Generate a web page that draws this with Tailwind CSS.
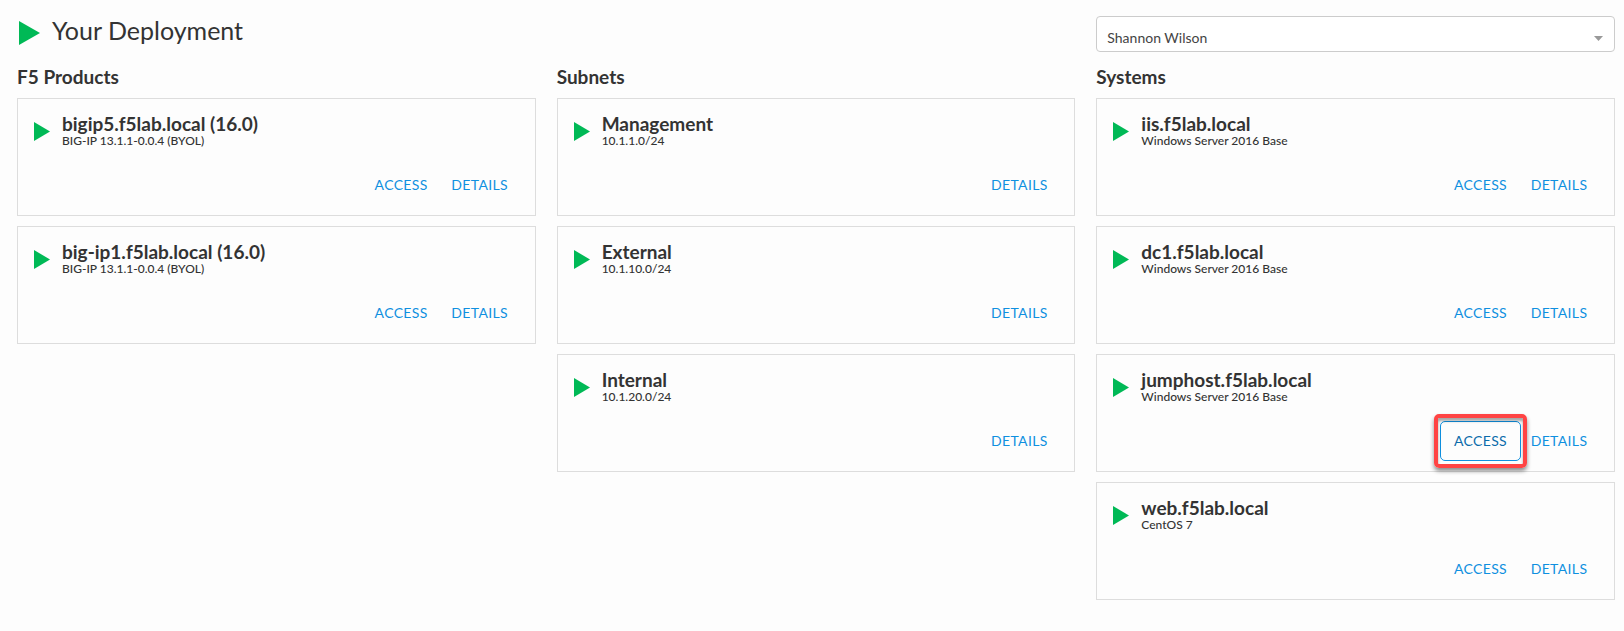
<!DOCTYPE html>
<html lang="en">
<head>
<meta charset="utf-8">
<title>Your Deployment</title>
<script src="https://cdn.jsdelivr.net/npm/@tailwindcss/browser@4"></script>
</head>
<body class="min-h-screen bg-[#fdfdfd] font-['Lato',sans-serif] text-[#333333]">
<svg class="hidden"><symbol id="play" viewBox="0 0 16 19" preserveAspectRatio="none"><path d="M0 0L16 9.5L0 19Z" fill="#00b956"/></symbol></svg>
<main class="pt-4 pr-[9px] pb-7 pl-[17px]">
  <header class="grid grid-cols-3 gap-x-[21px]">
    <div class="col-span-2 flex items-start">
      <svg class="mt-[5px] ml-[2px] h-6 w-[21px]"><use href="#play"/></svg>
      <h1 class="ml-3 text-[25px] leading-7 font-normal">Your Deployment</h1>
    </div>
    <div class="relative">
      <select aria-label="User" class="h-9 w-full appearance-none rounded border border-[#cccccc] bg-white px-[10px] pt-[7px] text-sm text-[#444444]"><option>Shannon Wilson</option></select>
      <svg class="pointer-events-none absolute top-5 right-3 h-[5px] w-[9px]" viewBox="0 0 9 5"><path d="M0 0H9L4.5 5Z" fill="#999999"/></svg>
    </div>
  </header>
  <div class="mt-[13px] grid grid-cols-3 items-start gap-x-[21px]">
    <section>
      <h2 class="text-[19px] leading-6 font-bold">F5 Products</h2>
      <div class="mt-[9px] flex flex-col gap-[10px]">
        <article class="flex h-[118px] flex-col justify-between border border-[#dddddd] pt-[14px] pr-[17px] pb-[10px] pl-4">
          <div class="flex"><svg class="mt-[9px] h-[19px] w-4"><use href="#play"/></svg><div class="ml-3"><h3 class="text-[19px] leading-[22px] font-bold">bigip5.f5lab.local (16.0)</h3><p class="text-xs leading-3 font-medium">BIG-IP 13.1.1-0.0.4 (BYOL)</p></div></div>
          <div class="flex justify-end"><button class="h-10 w-[81px] text-sm tracking-wide text-[#0f90e0]">ACCESS</button><button class="h-10 w-[76px] text-sm tracking-wide text-[#0f90e0]">DETAILS</button></div>
        </article>
        <article class="flex h-[118px] flex-col justify-between border border-[#dddddd] pt-[14px] pr-[17px] pb-[10px] pl-4">
          <div class="flex"><svg class="mt-[9px] h-[19px] w-4"><use href="#play"/></svg><div class="ml-3"><h3 class="text-[19px] leading-[22px] font-bold">big-ip1.f5lab.local (16.0)</h3><p class="text-xs leading-3 font-medium">BIG-IP 13.1.1-0.0.4 (BYOL)</p></div></div>
          <div class="flex justify-end"><button class="h-10 w-[81px] text-sm tracking-wide text-[#0f90e0]">ACCESS</button><button class="h-10 w-[76px] text-sm tracking-wide text-[#0f90e0]">DETAILS</button></div>
        </article>
      </div>
    </section>
    <section>
      <h2 class="text-[19px] leading-6 font-bold">Subnets</h2>
      <div class="mt-[9px] flex flex-col gap-[10px]">
        <article class="flex h-[118px] flex-col justify-between border border-[#dddddd] pt-[14px] pr-[17px] pb-[10px] pl-4">
          <div class="flex"><svg class="mt-[9px] h-[19px] w-4"><use href="#play"/></svg><div class="ml-3"><h3 class="text-[19px] leading-[22px] font-bold">Management</h3><p class="text-xs leading-3 font-medium">10.1.1.0/24</p></div></div>
          <div class="flex justify-end"><button class="h-10 w-[76px] text-sm tracking-wide text-[#0f90e0]">DETAILS</button></div>
        </article>
        <article class="flex h-[118px] flex-col justify-between border border-[#dddddd] pt-[14px] pr-[17px] pb-[10px] pl-4">
          <div class="flex"><svg class="mt-[9px] h-[19px] w-4"><use href="#play"/></svg><div class="ml-3"><h3 class="text-[19px] leading-[22px] font-bold">External</h3><p class="text-xs leading-3 font-medium">10.1.10.0/24</p></div></div>
          <div class="flex justify-end"><button class="h-10 w-[76px] text-sm tracking-wide text-[#0f90e0]">DETAILS</button></div>
        </article>
        <article class="flex h-[118px] flex-col justify-between border border-[#dddddd] pt-[14px] pr-[17px] pb-[10px] pl-4">
          <div class="flex"><svg class="mt-[9px] h-[19px] w-4"><use href="#play"/></svg><div class="ml-3"><h3 class="text-[19px] leading-[22px] font-bold">Internal</h3><p class="text-xs leading-3 font-medium">10.1.20.0/24</p></div></div>
          <div class="flex justify-end"><button class="h-10 w-[76px] text-sm tracking-wide text-[#0f90e0]">DETAILS</button></div>
        </article>
      </div>
    </section>
    <section>
      <h2 class="text-[19px] leading-6 font-bold">Systems</h2>
      <div class="mt-[9px] flex flex-col gap-[10px]">
        <article class="flex h-[118px] flex-col justify-between border border-[#dddddd] pt-[14px] pr-[17px] pb-[10px] pl-4">
          <div class="flex"><svg class="mt-[9px] h-[19px] w-4"><use href="#play"/></svg><div class="ml-3"><h3 class="text-[19px] leading-[22px] font-bold">iis.f5lab.local</h3><p class="text-xs leading-3 font-medium">Windows Server 2016 Base</p></div></div>
          <div class="flex justify-end"><button class="h-10 w-[81px] text-sm tracking-wide text-[#0f90e0]">ACCESS</button><button class="h-10 w-[76px] text-sm tracking-wide text-[#0f90e0]">DETAILS</button></div>
        </article>
        <article class="flex h-[118px] flex-col justify-between border border-[#dddddd] pt-[14px] pr-[17px] pb-[10px] pl-4">
          <div class="flex"><svg class="mt-[9px] h-[19px] w-4"><use href="#play"/></svg><div class="ml-3"><h3 class="text-[19px] leading-[22px] font-bold">dc1.f5lab.local</h3><p class="text-xs leading-3 font-medium">Windows Server 2016 Base</p></div></div>
          <div class="flex justify-end"><button class="h-10 w-[81px] text-sm tracking-wide text-[#0f90e0]">ACCESS</button><button class="h-10 w-[76px] text-sm tracking-wide text-[#0f90e0]">DETAILS</button></div>
        </article>
        <article class="flex h-[118px] flex-col justify-between border border-[#dddddd] pt-[14px] pr-[17px] pb-[10px] pl-4">
          <div class="flex"><svg class="mt-[9px] h-[19px] w-4"><use href="#play"/></svg><div class="ml-3"><h3 class="text-[19px] leading-[22px] font-bold">jumphost.f5lab.local</h3><p class="text-xs leading-3 font-medium">Windows Server 2016 Base</p></div></div>
          <div class="flex justify-end">
            <div class="relative"><button class="h-10 w-[81px] rounded-[5px] border border-[#0f90e0] bg-[#fdfdfd] text-sm tracking-wide text-[#0b6cab]">ACCESS</button>
              <span class="pointer-events-none absolute -inset-x-[6px] -inset-y-[7px] rounded-[5px] border-4 border-[#ff4444] shadow-[0_3px_4px_rgba(0,0,0,0.45),inset_0_3px_3px_rgba(0,0,0,0.35)]"></span></div>
            <button class="h-10 w-[76px] text-sm tracking-wide text-[#0f90e0]">DETAILS</button></div>
        </article>
        <article class="flex h-[118px] flex-col justify-between border border-[#dddddd] pt-[14px] pr-[17px] pb-[10px] pl-4">
          <div class="flex"><svg class="mt-[9px] h-[19px] w-4"><use href="#play"/></svg><div class="ml-3"><h3 class="text-[19px] leading-[22px] font-bold">web.f5lab.local</h3><p class="text-xs leading-3 font-medium">CentOS 7</p></div></div>
          <div class="flex justify-end"><button class="h-10 w-[81px] text-sm tracking-wide text-[#0f90e0]">ACCESS</button><button class="h-10 w-[76px] text-sm tracking-wide text-[#0f90e0]">DETAILS</button></div>
        </article>
      </div>
    </section>
  </div>
</main>
</body>
</html>
